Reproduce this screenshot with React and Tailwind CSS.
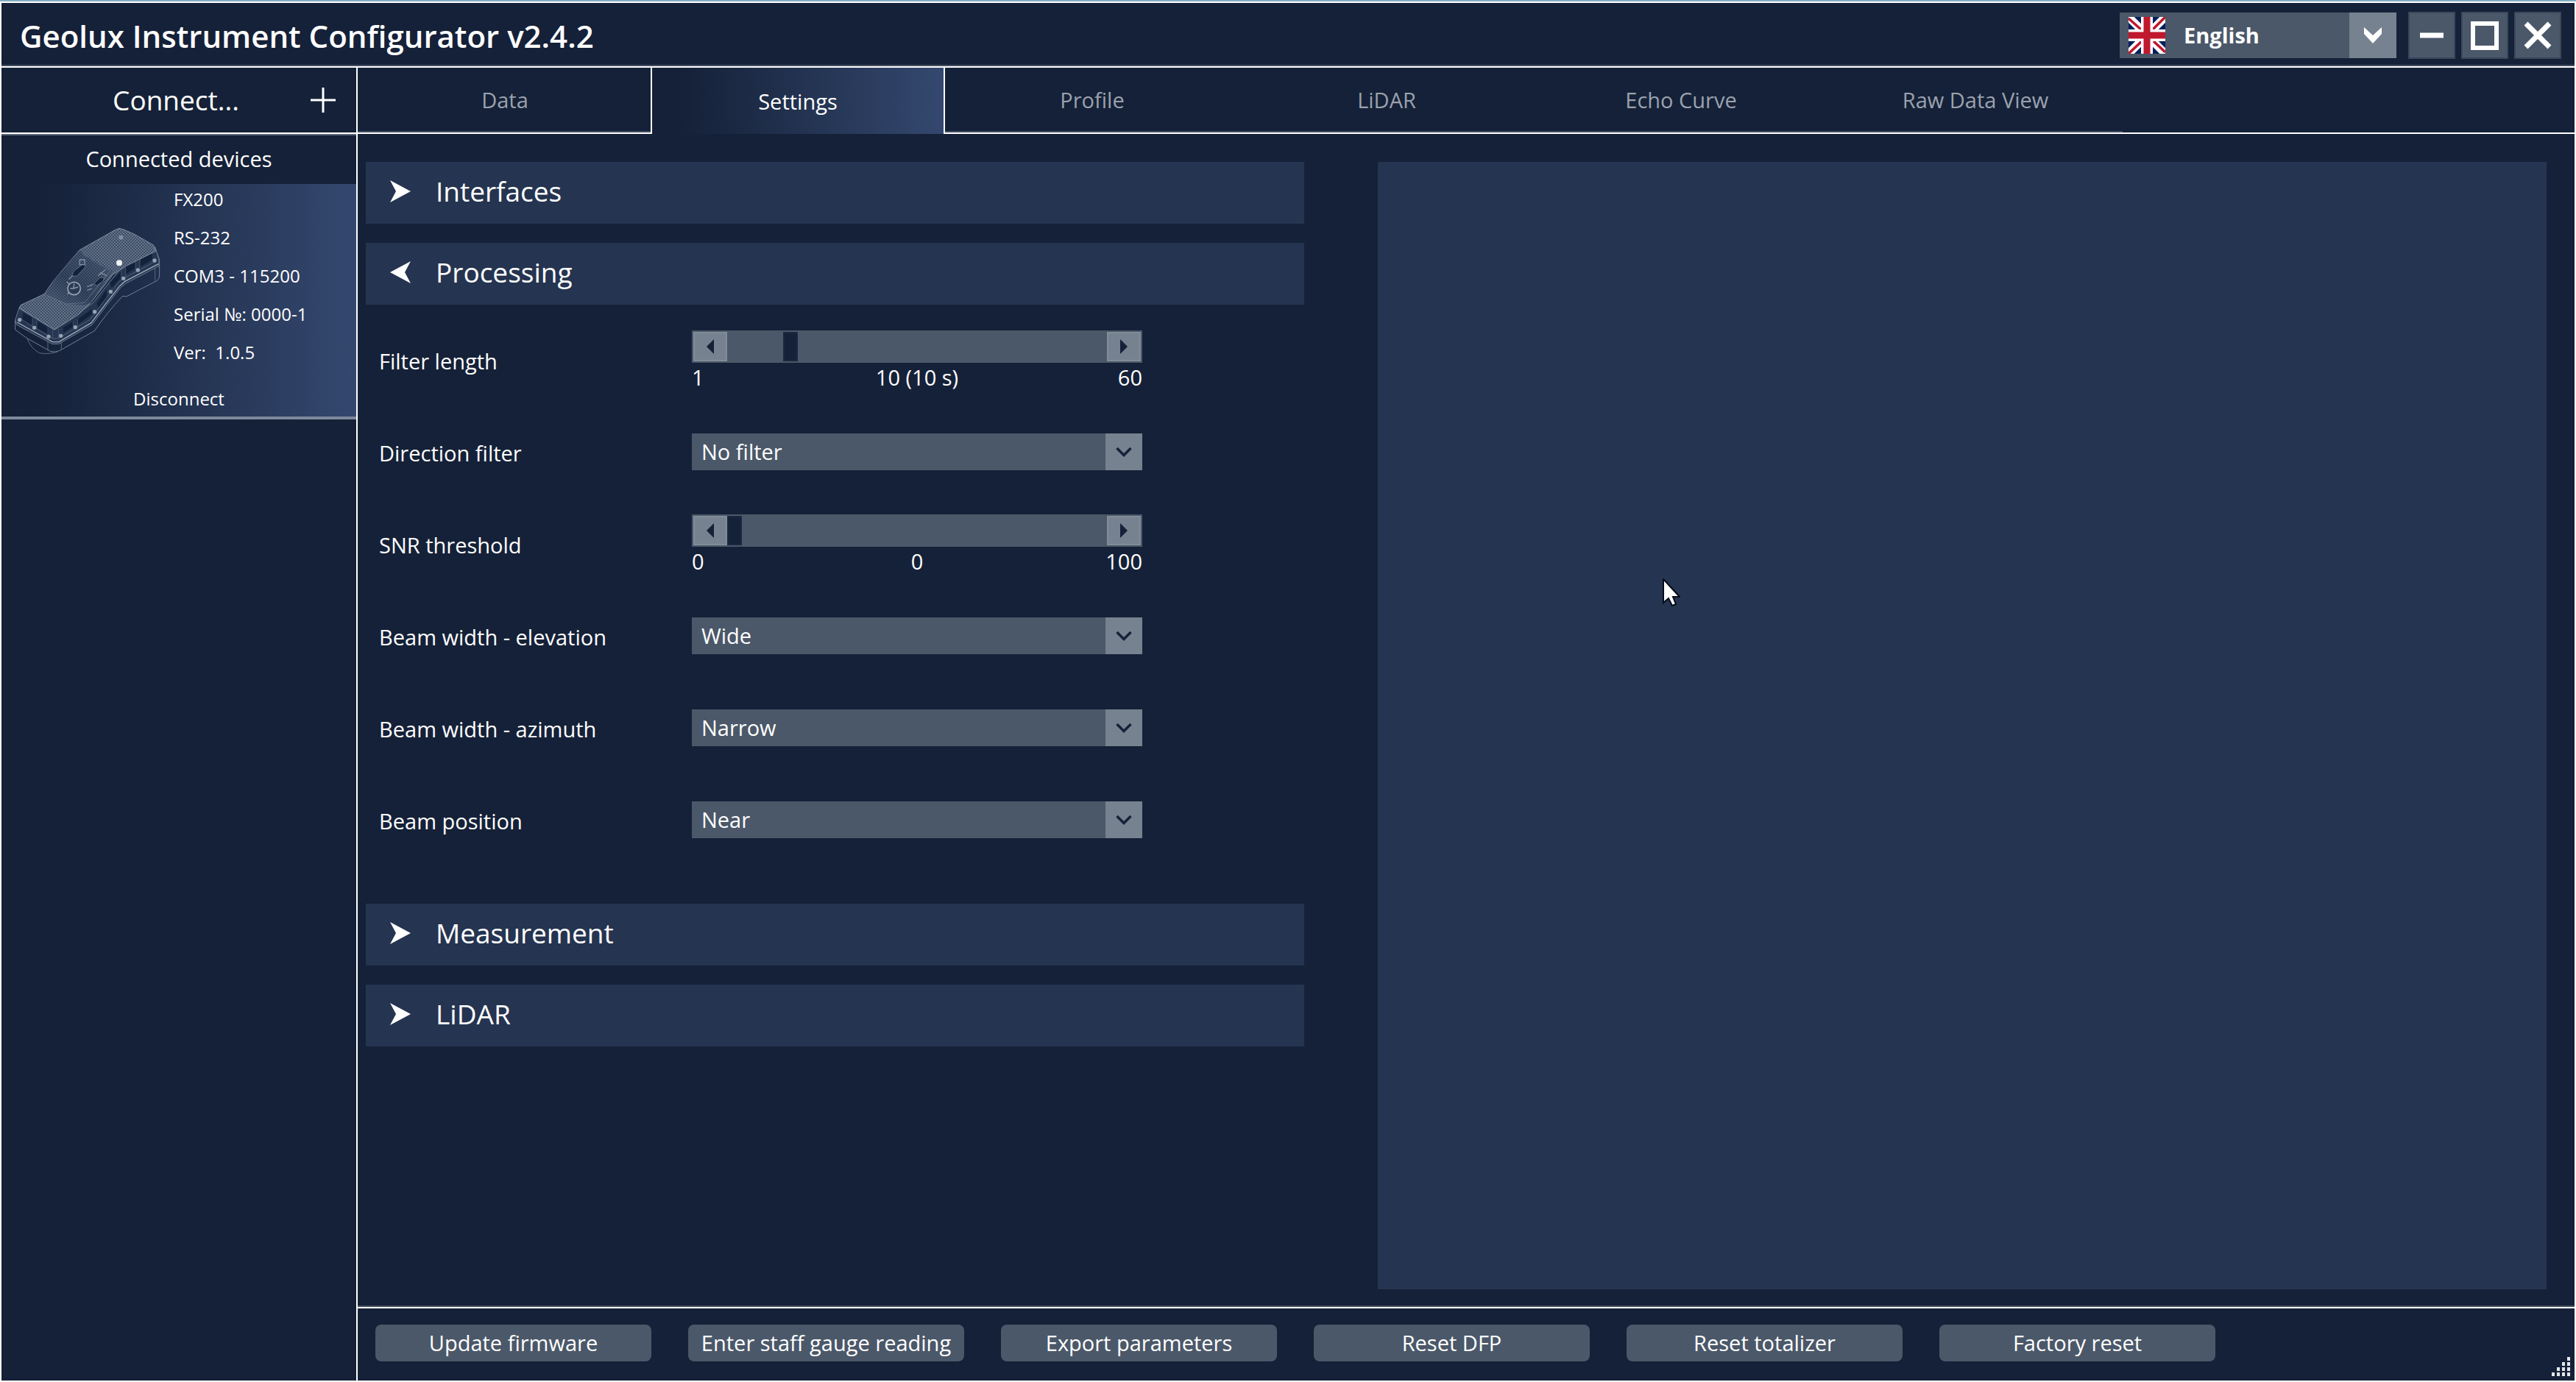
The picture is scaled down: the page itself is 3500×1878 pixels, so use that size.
import React, { useState } from 'react';

const TABS = ['Data', 'Settings', 'Profile', 'LiDAR', 'Echo Curve', 'Raw Data View'];

const ACTIONS = [
  'Update firmware',
  'Enter staff gauge reading',
  'Export parameters',
  'Reset DFP',
  'Reset totalizer',
  'Factory reset',
];

function FlagIcon() {
  return (
    <svg viewBox="0 0 50 50" className="w-[50px] h-[50px]" aria-hidden="true">
      <rect width="50" height="50" fill="#00205b" />
      <path d="M0 0L50 50M50 0L0 50" stroke="#fff" strokeWidth="11" />
      <path d="M0 2L18 18M50 0L33 17M0 50L18 33M34 33L50 48" stroke="#c0182c" strokeWidth="3.5" />
      <path d="M25 0V50M0 25H50" stroke="#fff" strokeWidth="16" />
      <path d="M25 0V50M0 25H50" stroke="#c0182c" strokeWidth="9" />
    </svg>
  );
}

function DeviceDrawing() {
  const bolts = [
    [80, 760], [140, 792], [198, 828], [248, 825], [307, 790], [386, 727],
    [451, 645], [503, 591], [562, 557], [630, 518],
  ];
  return (
    <svg viewBox="60 380 600 525" className="w-[200px] h-[175px] shrink-0" fill="none" aria-hidden="true">
      <defs>
        <pattern id="ribs" width="12" height="12" patternUnits="userSpaceOnUse">
          <rect width="12" height="12" fill="#36465f" />
          <path d="M0 12L12 0M0 0L12 12" stroke="#6c7a8f" strokeWidth="3" />
        </pattern>
        <linearGradient id="slope" x1="0" y1="1" x2="1" y2="0">
          <stop offset="0" stopColor="#1c2b46" stopOpacity="0.1" />
          <stop offset="0.4" stopColor="#1c2b46" stopOpacity="0.6" />
          <stop offset="1" stopColor="#1c2b46" stopOpacity="0.2" />
        </linearGradient>
      </defs>
      {/* outer shell */}
      <path
        d="M62 760V800L110 835L205 888Q222 894 242 886L385 805Q440 725 500 663L515 665L640 600Q652 590 650 575V515L632 465"
        stroke="#71809a"
        strokeWidth="3"
      />
      <path d="M110 835Q125 875 160 895Q195 902 235 890M195 845V885M250 845V880M632 545V600" stroke="#5a6a84" strokeWidth="3" />
      {/* side wall */}
      <path
        d="M78 712L62 760L68 780L212 858H240L375 780Q435 700 492 628L512 612L648 540V515L632 462L500 540L380 690L222 800Z"
        fill="#263651"
        stroke="#6d7b92"
        strokeWidth="3"
      />
      <path
        d="M94 730L132 752V784L92 764ZM150 764L192 790V816L150 794ZM258 790L298 768V788L258 812ZM316 758L374 716V738L316 780ZM395 692L434 636V670L400 710ZM448 608L494 562V586L455 630ZM512 544L552 524V550L512 574ZM572 514L620 486V514L572 544Z"
        fill="#14213a"
      />
      <path d="M132 750V790M150 762V792M298 768V790M316 758V785M494 560V590M512 548V585M552 524V556M570 514V548M215 800V836M238 796V836" stroke="#56657d" strokeWidth="2" />
      <path d="M70 770L214 850H240L372 772Q430 695 488 622L508 604L646 532" stroke="#a3adbb" strokeWidth="4" />
      <path d="M78 752L214 836H236L366 760Q425 680 484 606L506 590L636 520" stroke="#66748b" strokeWidth="2" />
      {/* ribbed top */}
      <path
        d="M78 712L84 700L180 655L215 605L290 515L325 475L470 393L487 387L505 392L550 412L625 455L635 480L520 537L460 575L370 690L320 738L222 800Z"
        fill="url(#ribs)"
        stroke="#8490a2"
        strokeWidth="3"
      />
      <path d="M180 655L215 605L290 515L325 475L340 490L460 560L370 690L345 700L270 695Z" fill="url(#slope)" />
      <path d="M180 655L270 695L345 690L450 560L335 490" stroke="#5f6e84" strokeWidth="3" />
      {/* mounting slots and bubble level */}
      <path d="M292 580L302 560L335 535H348L345 548L312 582ZM385 610L408 588H425L420 602L392 622Z" fill="#14213a" stroke="#7c899c" strokeWidth="2" />
      <path d="M325 515H345V535H325ZM400 580L430 555M408 568L436 580M355 625L380 615M355 640L375 632M280 595L296 580" stroke="#8490a2" strokeWidth="4" />
      <circle cx="302" cy="632" r="26" fill="#2b3a54" stroke="#98a3b3" strokeWidth="5" />
      <path d="M286 632H300L318 626M302 612L300 632M272 604L282 614M275 655L285 648" stroke="#8d99aa" strokeWidth="4" />
      <circle cx="493" cy="424" r="9" fill="#8490a2" />
      <circle cx="486" cy="528" r="12" fill="#eef0f4" />
      {bolts.map(([x, y]) => (
        <circle key={x} cx={x} cy={y} r="8" fill="#98a3b2" />
      ))}
    </svg>
  );
}

function Combo({ id, options }) {
  return (
    <div className="relative h-[50px] mb-1">
      <select id={id} className="appearance-none w-full h-full pl-[13px] pr-[50px] bg-[#4b5869] text-white outline-none">
        {options.map((o) => (
          <option key={o}>{o}</option>
        ))}
      </select>
      <div className="absolute right-0 top-0 w-[50px] h-full bg-[#778290] flex items-center justify-center pointer-events-none">
        <svg viewBox="0 0 22 14" className="w-[22px] h-[14px]" fill="none" aria-hidden="true">
          <path d="M1.500 2L11 11.500L20.500 2" stroke="#152138" strokeWidth="3.500" />
        </svg>
      </div>
    </div>
  );
}

function StepButton({ label, onClick, d }) {
  return (
    <button type="button" aria-label={label} onClick={onClick} className="w-[46px] h-full bg-[#778290] border-2 border-[#828c99] flex items-center justify-center">
      <svg viewBox="0 0 10 20" className="w-[10px] h-[20px]" aria-hidden="true">
        <path d={d} fill="#152138" />
      </svg>
    </button>
  );
}

function Slider({ id, min, max, initial, format }) {
  const [value, setValue] = useState(initial);
  const step = (n) => setValue((v) => Math.min(max, Math.max(min, v + n)));

  return (
    <div>
      <div className="flex h-[44px] p-[2px] bg-[#4b5869]">
        <StepButton label="Decrease" onClick={() => step(-1)} d="M10 0V20L0 10Z" />
        <input
          id={id}
          type="range"
          min={min}
          max={max}
          value={value}
          onChange={(e) => setValue(Number(e.target.value))}
          className="appearance-none flex-1 min-w-0 h-full bg-transparent outline-none [&::-webkit-slider-thumb]:appearance-none [&::-webkit-slider-thumb]:w-[20px] [&::-webkit-slider-thumb]:h-[40px] [&::-webkit-slider-thumb]:bg-[#152138] [&::-webkit-slider-thumb]:border-2 [&::-webkit-slider-thumb]:border-[#1b2842]"
        />
        <StepButton label="Increase" onClick={() => step(1)} d="M0 0V20L10 10Z" />
      </div>
      <div className="grid grid-cols-3 leading-[40px]">
        <span>{min}</span>
        <span className="text-center">{format ? format(value) : value}</span>
        <span className="text-right">{max}</span>
      </div>
    </div>
  );
}

function Row({ id, label, children }) {
  return (
    <div className="grid grid-cols-[425px_612px] items-center h-[125px] pl-[18px]">
      <label htmlFor={id}>{label}</label>
      {children}
    </div>
  );
}

function Section({ title, open, onToggle, children }) {
  return (
    <section>
      <button
        type="button"
        aria-expanded={open}
        onClick={onToggle}
        className="w-full h-[84px] pl-[33px] pb-1 bg-[#253450] flex items-center gap-[34px] text-[37px] text-left"
      >
        <svg viewBox="0 0 28 30" className="w-[28px] h-[30px]" aria-hidden="true">
          <path d={open ? 'M28 0L0 15L28 30L20 15Z' : 'M0 0L28 15L0 30L8 15Z'} fill="#fff" />
        </svg>
        {title}
      </button>
      {open && children && <div className="pt-[14px] pb-6">{children}</div>}
    </section>
  );
}

function WindowButton({ label, children }) {
  return (
    <button type="button" aria-label={label} className="w-[64px] h-[64px] bg-[#4b5869] border-2 border-[#3b475b] flex items-center justify-center">
      <svg viewBox="0 0 40 40" className="w-[40px] h-[40px]" fill="none" stroke="#fff" aria-hidden="true">
        {children}
      </svg>
    </button>
  );
}

export default function App() {
  const [activeTab, setActiveTab] = useState('Settings');
  const [open, setOpen] = useState({ processing: true });
  const toggle = (key) => setOpen((o) => ({ ...o, [key]: !o[key] }));

  return (
    <div className="min-h-screen flex flex-col border-t-2 border-[#84adc4] bg-[#152138] text-white text-[29px] font-['Open_Sans','Noto_Sans',sans-serif]">
      <div className="flex-1 flex flex-col border-2 border-white">
        {/* Title bar */}
        <header className="h-[88px] pt-[2px] pl-[25px] pr-[18px] flex items-center justify-between border-b-2 border-white shadow-[inset_0_-2px_#454f63]">
          <h1 className="text-[42px] font-semibold">Geolux Instrument Configurator v2.4.2</h1>
          <div className="flex items-center gap-2">
            <div className="relative w-[376px] h-[62px] mr-2">
              <select aria-label="Language" className="appearance-none w-full h-full pl-[87px] bg-[#4b5869] text-white font-bold outline-none">
                <option>English</option>
              </select>
              <div className="absolute left-[12px] top-[6px] pointer-events-none">
                <FlagIcon />
              </div>
              <div className="absolute right-0 top-0 w-[64px] h-full bg-[#778290] flex items-center justify-center pointer-events-none">
                <svg viewBox="0 0 24 22" className="w-[24px] h-[22px]" aria-hidden="true">
                  <path d="M0 0L12 11L24 0V9L12 22L0 9Z" fill="#fff" />
                </svg>
              </div>
            </div>
            <WindowButton label="Minimize">
              <path d="M4 20H36" strokeWidth="7" />
            </WindowButton>
            <WindowButton label="Maximize">
              <rect x="4" y="4" width="32" height="33" strokeWidth="6" />
            </WindowButton>
            <WindowButton label="Close">
              <path d="M4 4L36 36M36 4L4 36" strokeWidth="7" />
            </WindowButton>
          </div>
        </header>

        <div className="flex-1 flex">
          {/* Devices */}
          <aside className="w-[484px] shrink-0 border-r-2 border-white">
            <button type="button" className="w-full h-[90px] flex items-center text-[37px] border-b-2 border-white shadow-[0_2px_#5c687b]">
              <span className="flex-1 pl-[54px]">Connect...</span>
              <svg viewBox="0 0 34 34" className="w-[34px] h-[34px] mr-[28px]" stroke="#fff" strokeWidth="3" aria-hidden="true">
                <path d="M17 0V34M0 17H34" />
              </svg>
            </button>
            <h2 className="h-[68px] leading-[68px] text-center">Connected devices</h2>
            <div className="text-[24px] leading-[26px] bg-linear-to-r from-[#152138] from-10% to-[#34486f] border-b-4 border-[#7d889b]">
              <div className="flex gap-[16px] pl-[18px] pt-2">
                <div className="pt-[50px]">
                  <DeviceDrawing />
                </div>
                <ul className="flex flex-col gap-[26px] whitespace-pre">
                  <li>FX200</li>
                  <li>RS-232</li>
                  <li>COM3 - 115200</li>
                  <li>Serial №: 0000-1</li>
                  <li>Ver:  1.0.5</li>
                </ul>
              </div>
              <button type="button" className="block w-full pt-[37px] pb-[11px]">Disconnect</button>
            </div>
          </aside>

          <main className="flex-1 min-w-0 flex flex-col">
            <nav role="tablist" className="flex h-[90px]">
              {TABS.map((tab) => (
                <button
                  key={tab}
                  type="button"
                  role="tab"
                  aria-selected={activeTab === tab}
                  onClick={() => setActiveTab(tab)}
                  className={
                    activeTab === tab
                      ? 'w-[400px] pt-[2px] -ml-[2px] border-x-2 border-white bg-linear-to-r from-[#152138] from-10% to-[#34486f]'
                      : 'w-[400px] text-[#9aa2ae] border-b-2 border-white shadow-[inset_0_-2px_#454f63]'
                  }
                >
                  {tab}
                </button>
              ))}
              <div className="flex-1 border-b-2 border-white" />
            </nav>

            <div className="flex-1 grid grid-cols-[1275fr_1588fr] gap-[100px] pt-[38px] pl-[11px] pr-[38px] pb-6">
              <div className="flex flex-col gap-[26px]">
                <Section title="Interfaces" open={!!open.interfaces} onToggle={() => toggle('interfaces')} />
                <Section title="Processing" open={!!open.processing} onToggle={() => toggle('processing')}>
                  <Row id="filter-length" label="Filter length">
                    <Slider id="filter-length" min={1} max={60} initial={10} format={(v) => `${v} (${v} s)`} />
                  </Row>
                  <Row id="direction" label="Direction filter">
                    <Combo id="direction" options={['No filter']} />
                  </Row>
                  <Row id="snr" label="SNR threshold">
                    <Slider id="snr" min={0} max={100} initial={0} />
                  </Row>
                  <Row id="elevation" label="Beam width - elevation">
                    <Combo id="elevation" options={['Wide', 'Narrow']} />
                  </Row>
                  <Row id="azimuth" label="Beam width - azimuth">
                    <Combo id="azimuth" options={['Narrow', 'Wide']} />
                  </Row>
                  <Row id="position" label="Beam position">
                    <Combo id="position" options={['Near', 'Far']} />
                  </Row>
                </Section>
                <Section title="Measurement" open={!!open.measurement} onToggle={() => toggle('measurement')} />
                <Section title="LiDAR" open={!!open.lidar} onToggle={() => toggle('lidar')} />
              </div>

              <div className="relative bg-[#253450]">
                <svg viewBox="0 0 24 38" className="absolute left-[387px] top-[566px] w-[24px] h-[38px]" aria-hidden="true">
                  <path d="M1 1V33L8 27L13 37L18 35L14 25H23Z" fill="#fff" stroke="#050b1a" strokeWidth="2" />
                </svg>
              </div>
            </div>

            {/* Device actions */}
            <footer className="h-[100px] pt-[22px] pl-6 flex items-start gap-[50px] border-t-2 border-white shadow-[0_-2px_#454f63]">
              {ACTIONS.map((action) => (
                <button key={action} type="button" className="w-[375px] h-[50px] rounded-lg bg-[#4b5869] whitespace-nowrap">
                  {action}
                </button>
              ))}
              <svg viewBox="0 0 26 26" className="w-[26px] h-[26px] ml-auto mr-[6px] mb-[6px] self-end" fill="#e3e7ec" aria-hidden="true">
                <path d="M22 0h4v5h-4zM22 7h4v5h-4zM15 7h4v5h-4zM22 14h4v5h-4zM15 14h4v5h-4zM8 14h4v5h-4zM22 21h4v5h-4zM15 21h4v5h-4zM8 21h4v5h-4zM1 21h4v5h-4z" />
              </svg>
            </footer>
          </main>
        </div>
      </div>
    </div>
  );
}
